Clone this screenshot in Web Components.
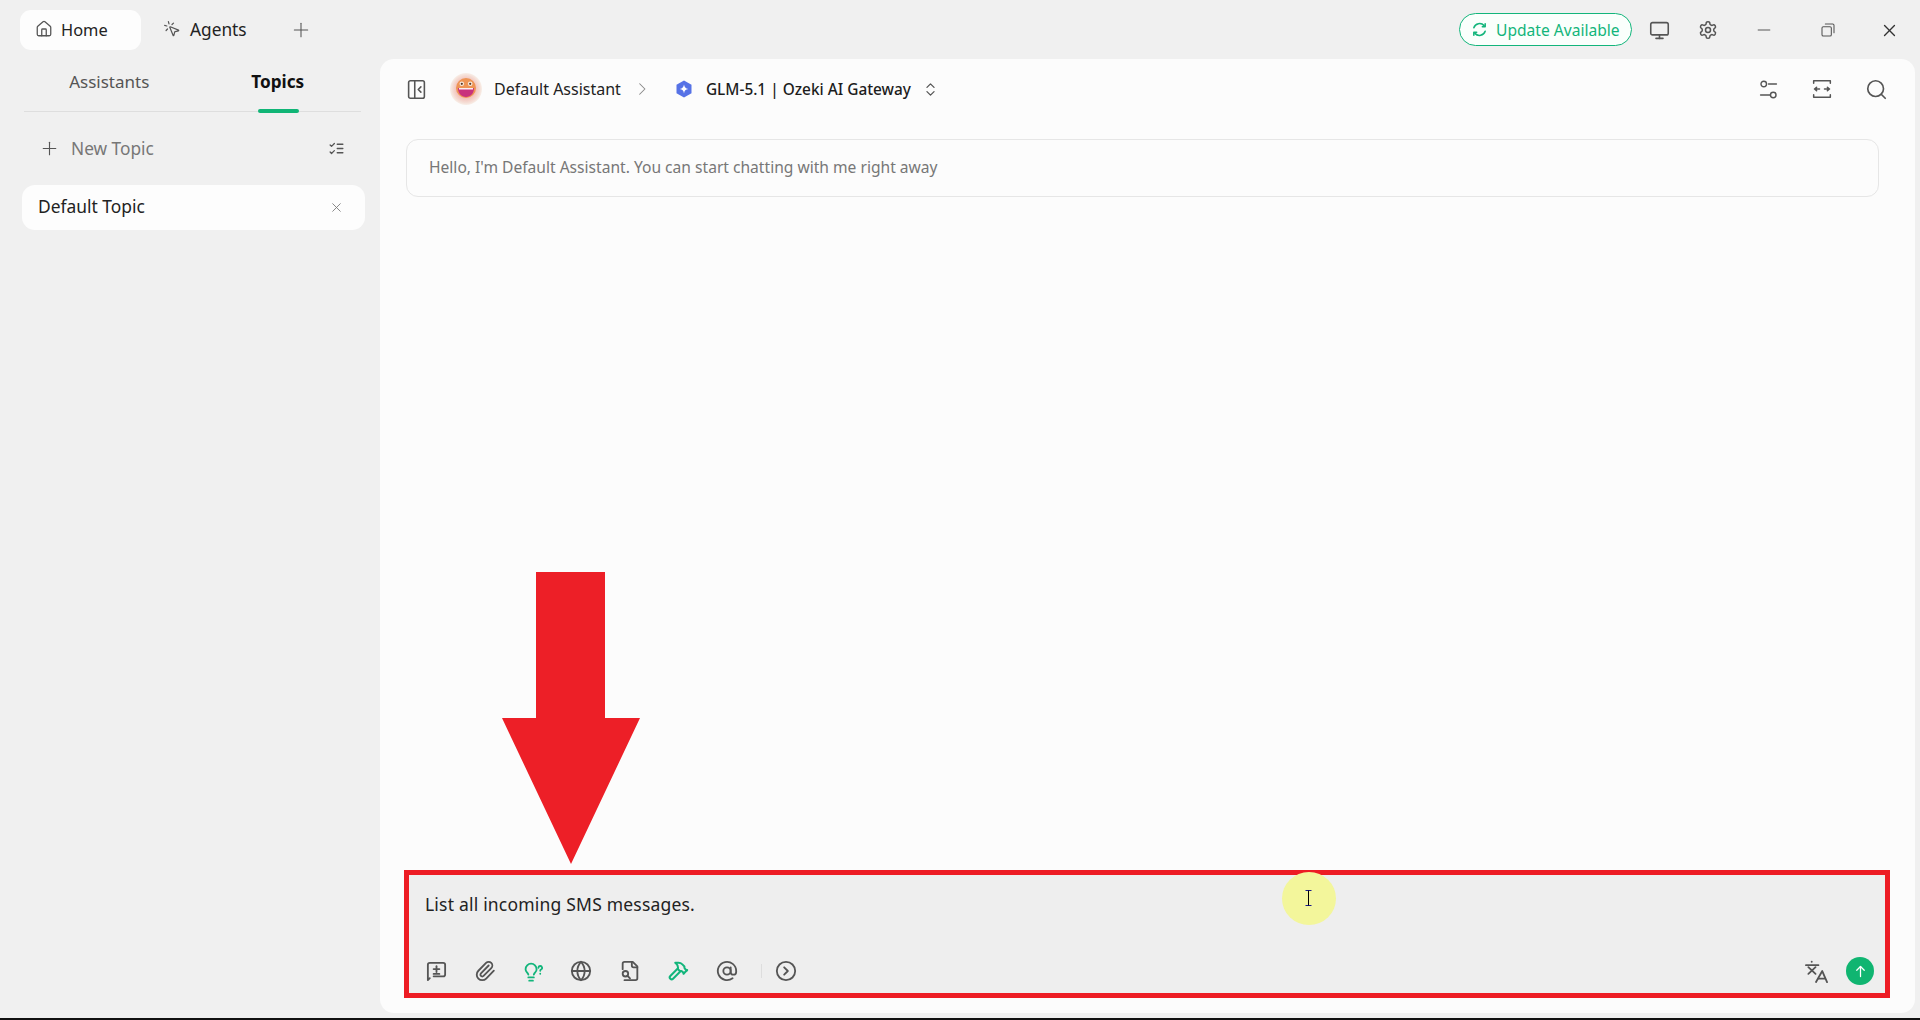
<!DOCTYPE html>
<html><head><meta charset="utf-8">
<style>
html,body{margin:0;padding:0;background:#f0f0f0}
body{font-family:"Noto Sans","Open Sans",sans-serif;overflow:hidden}
</style></head>
<body>
<app-root></app-root>
<script>
const ICONS={
house:'<path d="M15 21v-8a1 1 0 0 0-1-1h-4a1 1 0 0 0-1 1v8"/><path d="M3 10a2 2 0 0 1 .709-1.528l7-5.999a2 2 0 0 1 2.582 0l7 5.999A2 2 0 0 1 21 10v9a2 2 0 0 1-2 2H5a2 2 0 0 1-2-2z"/>',
agent:'<path d="M14 4.1 12 6"/><path d="m5.1 8-2.9-.8"/><path d="m6 12-1.9 2"/><path d="M7.2 2.2 8 5.1"/><path d="M9.037 9.69a.498.498 0 0 1 .653-.653l11 4.5a.5.5 0 0 1-.074.949l-4.349 1.041a1 1 0 0 0-.74.739l-1.04 4.35a.5.5 0 0 1-.95.074z"/>',
plus:'<path d="M12 2v20"/><path d="M2 12h20"/>',
listchecks:'<path d="m3 17 2 2 4-4"/><path d="m3 7 2 2 4-4"/><path d="M13 6h8"/><path d="M13 12h8"/><path d="M13 18h8"/>',
x:'<path d="M19 5 5 19"/><path d="m5 5 14 14"/>',
panel:'<rect x="3" y="2" width="18" height="20" rx="2"/><path d="M10 2v20"/><path d="m17 15-3-3 3-3"/>',
chevright:'<path d="m8 3 9 9-9 9"/>',
updown:'<path d="m7 15 5 5 5-5"/><path d="m7 9 5-5 5 5"/>',
search:'<circle cx="11" cy="11" r="9"/><path d="m22 22-4.6-4.6"/>',
monitor:'<rect x="2" y="3" width="20" height="14" rx="2"/><path d="M8 21h8"/><path d="M12 17v4"/>',
gear:'<path d="M12.22 2h-.44a2 2 0 0 0-2 2v.18a2 2 0 0 1-1 1.73l-.43.25a2 2 0 0 1-2 0l-.15-.08a2 2 0 0 0-2.73.73l-.22.38a2 2 0 0 0 .73 2.73l.15.1a2 2 0 0 1 1 1.72v.51a2 2 0 0 1-1 1.74l-.15.09a2 2 0 0 0-.73 2.73l.22.38a2 2 0 0 0 2.73.73l.15-.08a2 2 0 0 1 2 0l.43.25a2 2 0 0 1 1 1.73V20a2 2 0 0 0 2 2h.44a2 2 0 0 0 2-2v-.18a2 2 0 0 1 1-1.73l.43-.25a2 2 0 0 1 2 0l.15.08a2 2 0 0 0 2.73-.73l.22-.39a2 2 0 0 0-.73-2.73l-.15-.08a2 2 0 0 1-1-1.74v-.5a2 2 0 0 1 1-1.74l.15-.09a2 2 0 0 0 .73-2.73l-.22-.38a2 2 0 0 0-2.73-.73l-.15.08a2 2 0 0 1-2 0l-.43-.25a2 2 0 0 1-1-1.73V4a2 2 0 0 0-2-2z"/><circle cx="12" cy="12" r="3"/>',
sync:'<path d="M4 9.500A8.600 8.600 0 0 1 18.500 6.500"/><path d="M20 14.500A8.600 8.600 0 0 1 5.500 17.500"/><path d="M16 8h4V4"/><path d="M8 16H4v4"/>',
minus:'<path d="M2 12h20"/>',
restore:'<rect x="3" y="7" width="14" height="14" rx="2"/><path d="M8 3h11a2 2 0 0 1 2 2v11"/>',
sliders:'<path d="M12 5h10"/><path d="M2 19h12"/><circle cx="6" cy="5" r="3.500"/><circle cx="18" cy="19" r="3.500"/>',
narrow:'<path d="M2 5V2h20v3"/><path d="M2 19v3h20v-3"/><path d="M9 12H3m2.500-2L3 12l2.500 2"/><path d="M15 12h6m-2.500-2 2.500 2-2.500 2"/>',
msgdiff:'<path d="m5 19-2 2V5a2 2 0 0 1 2-2h14a2 2 0 0 1 2 2v10a2 2 0 0 1-2 2H9"/><path d="M9 9.500h6"/><path d="M12 6.500v6"/><path d="M9 14.500h6"/>',
clip:'<path d="m16 6-8.414 8.586a2 2 0 0 0 2.829 2.829l8.414-8.586a4 4 0 1 0-5.657-5.657l-8.379 8.551a6 6 0 1 0 8.485 8.485l8.379-8.551"/>',
bulb:'<path d="M14 16c.2-1 .7-1.700 1.500-2.500 1-.9 1.500-2.200 1.500-3.500A6 6 0 0 0 5 10c0 1 .2 2.200 1.500 3.500.7.700 1.300 1.500 1.500 2.500"/><path d="M8 19h6"/><path d="M9 22.500h4"/><path d="M19 8.500a2 2 0 1 1 2.800 1.900c-.6.300-.8.700-.8 1.300"/><path d="M21 15v.1"/>',
globe:'<circle cx="12" cy="12" r="10"/><path d="M12 2a14.500 14.500 0 0 0 0 20 14.500 14.500 0 0 0 0-20"/><path d="M2 12h20"/>',
filesearch:'<path d="M14 2v4a2 2 0 0 0 2 2h4"/><path d="M6 22h12a2 2 0 0 0 2-2V7l-5-5H6a2 2 0 0 0-2 2v6"/><circle cx="7" cy="15" r="3"/><path d="m12 20-2.800-2.800"/>',
hammer:'<path d="m15 12-8.373 8.373a1 1 0 1 1-3-3L12 9"/><path d="m18 15 4-4"/><path d="m21.500 11.500-1.914-1.914A2 2 0 0 1 19 8.172V7l-2.260-2.260a6 6 0 0 0-4.202-1.756L9 2.960l.92.82A6.180 6.180 0 0 1 12 8.400V10l2 2h1.172a2 2 0 0 1 1.414.586L18.500 14.500"/>',
at:'<circle cx="12" cy="12" r="4"/><path d="M16 8v5a3 3 0 0 0 6 0v-1a10 10 0 1 0-3.920 7.940"/>',
circright:'<circle cx="12" cy="12" r="10"/><path d="m10 8 4 4-4 4"/>',
translate:'<circle cx="7" cy="1.800" r="1" fill="currentColor" stroke="none"/><path d="M1 5.400h13"/><path d="m3.500 7.500 7.500 7"/><path d="m11 7.500-7.500 7"/><path d="m11.500 23 6.500-11.500 5 11.500"/><path d="M14 19.500h7"/>',
arrowup:'<path d="M12 20V4"/><path d="m6 10 6-6 6 6"/>'
};
class XIcon extends HTMLElement{
  connectedCallback(){
    const s=+(this.getAttribute('size')||20),w=this.getAttribute('w')||1.6,c=this.getAttribute('color')||'#555';
    const sh=this.attachShadow({mode:'open'});
    sh.innerHTML=`<style>:host{display:inline-flex;flex:none;width:${s}px;height:${s}px;color:${c}}svg{display:block;width:100%;height:100%;fill:none;stroke:currentColor;stroke-width:${w};stroke-linecap:round;stroke-linejoin:round}</style><svg viewBox="0 0 24 24">${ICONS[this.getAttribute('name')]}</svg>`;
  }
}
customElements.define('x-icon',XIcon);

function comp(name,css,html){
  customElements.define(name,class extends HTMLElement{
    constructor(){super();this.attachShadow({mode:'open'}).innerHTML=`<style>${css}</style>${html}`;}
  });
}
comp('nav-tab',`:host{display:inline-flex;align-items:center;gap:9px;height:40px;box-sizing:border-box;padding:0 0 2px 15px;font-size:17.3px;color:#222}
:host([active]){background:#fdfdfd;border-radius:11px;width:121px;font-size:16.4px;gap:8px}
`,`<slot name="icon"></slot><slot></slot>`);
comp('title-bar',`:host{display:flex;align-items:center;height:59px;box-sizing:border-box;padding-left:20px;padding-top:1px;flex:none}
.agents{margin-left:7px}
.add{margin-left:46px}
.right{margin-left:auto;display:flex;align-items:center}
.pill{display:flex;align-items:center;gap:8px;width:173px;height:33px;box-sizing:border-box;border:1px solid #12b57b;border-radius:17px;background:#fafffc;padding-left:11px;color:#12b57b;font-size:15.6px;margin-top:-1px;white-space:nowrap}
.cell{display:flex;align-items:center;justify-content:center;height:40px}
`,`<nav-tab active><x-icon slot="icon" name="house" size="18" w="1.7"></x-icon>Home</nav-tab>
<nav-tab class="agents"><x-icon slot="icon" name="agent" size="18" w="1.6"></x-icon>Agents</nav-tab>
<x-icon class="add" name="plus" size="16" w="1.6"></x-icon>
<div class="right"><div class="pill"><x-icon name="sync" size="17" w="2.2" color="#12b57b"></x-icon><span>Update Available</span></div>
<div class="cell" style="width:51px;padding-left:2px"><x-icon name="monitor" size="21" w="1.8"></x-icon></div>
<div class="cell" style="width:46px"><x-icon name="gear" size="20" w="1.8"></x-icon></div>
<div class="cell" style="width:66px"><x-icon name="minus" size="14" w="1.7" color="#555"></x-icon></div>
<div class="cell" style="width:61px"><x-icon name="restore" size="16" w="1.6" color="#555"></x-icon></div>
<div class="cell" style="width:62px"><x-icon name="x" size="17" w="1.9" color="#333"></x-icon></div>
</div>`);
comp('side-bar',`:host{display:flex;flex-direction:column;width:380px;flex:none}
.tabs{display:grid;grid-template-columns:1fr 1fr;margin:0 19px 0 24px;height:53px;box-sizing:border-box;border-bottom:1px solid #dedede}
.tab{position:relative;text-align:center;font-size:17px;line-height:20px;padding:13px 0 0 2px;color:#555}
.tab.on{color:#111;font-weight:700;font-size:17.2px}
.tab.on::after{content:"";position:absolute;left:65px;bottom:-2px;width:41px;height:4px;border-radius:2px;background:#10b576}
.new{display:flex;align-items:center;height:38px;margin-top:17px;padding:0 35px 0 42px;color:#777;font-size:17.3px}
.new span{margin-left:14px;flex:1}
.card{display:flex;align-items:center;justify-content:space-between;height:45px;margin:18px 15px 0 22px;box-sizing:border-box;padding:0 22px 3px 16px;border-radius:13px;background:#fdfdfd;color:#222;font-size:17.4px}
.card x-icon{margin-top:3px}
`,`<div class="tabs"><div class="tab">Assistants</div><div class="tab on">Topics</div></div>
<div class="new"><x-icon name="plus" size="15" w="1.8"></x-icon><span>New Topic</span><x-icon name="listchecks" size="17" w="1.8"></x-icon></div>
<div class="card"><span>Default Topic</span><x-icon name="x" size="13" w="1.6" color="#777"></x-icon></div>`);
comp('assistant-avatar',`:host{display:inline-block;flex:none;width:32px;height:32px}svg{display:block;width:100%;height:100%}`,
`<svg viewBox="0 0 32 32"><defs><radialGradient id="g"><stop offset=".5" stop-color="#f2b8b0"/><stop offset=".85" stop-color="#f5ddd5"/><stop offset="1" stop-color="#f8efe8"/></radialGradient><filter id="b" x="-10%" y="-10%" width="120%" height="120%"><feGaussianBlur stdDeviation=".35"/></filter></defs><circle cx="16" cy="16" r="16" fill="url(#g)"/><g filter="url(#b)"><circle cx="16" cy="15" r="10" fill="#ee9455"/><circle cx="11.800" cy="10.800" r="2.300" fill="#f6e8dc"/><circle cx="20.200" cy="10.800" r="2.300" fill="#f6e8dc"/><circle cx="11.800" cy="10.800" r="1.100" fill="#5a3520"/><circle cx="20.200" cy="10.800" r="1.100" fill="#5a3520"/><path d="M8 15h16c0 5.500-3.400 9-8 9s-8-3.500-8-9z" fill="#c8337d"/><path d="M9 15h14v1.500H9z" fill="#fbeef0"/></g></svg>`);
comp('chat-header',`:host{display:flex;align-items:center;height:60px;flex:none;box-sizing:border-box;padding:0 28px 0 26px;font-size:16px;color:#222}
.name{margin-left:12px;white-space:nowrap}
.model{margin-left:13px;font-weight:500;font-size:15.4px;white-space:nowrap;color:#1c1c1c}
.right{margin-left:auto;display:flex;align-items:center}
`,`<x-icon name="panel" size="21" w="1.8"></x-icon>
<assistant-avatar style="margin-left:23px"></assistant-avatar>
<span class="name">Default Assistant</span>
<x-icon name="chevright" size="14" w="1.8" color="#888" style="margin-left:14px"></x-icon>
<svg width="18" height="18" viewBox="0 0 18 18" style="margin-left:26px;flex:none"><path d="M9 .6 16.500 4.800v8.400L9 17.400 1.500 13.200V4.800z" fill="#5672e6"/><path d="M9 4.600c.5 2.800 1.500 3.900 4.300 4.400-2.800.5-3.800 1.600-4.300 4.400-.5-2.800-1.500-3.900-4.300-4.400 2.800-.5 3.800-1.600 4.300-4.400z" fill="#fff"/></svg>
<span class="model">GLM-5.1 | Ozeki AI Gateway</span>
<x-icon name="updown" size="17" w="1.8" style="margin-left:11px"></x-icon>
<div class="right"><x-icon name="sliders" size="19" w="1.8"></x-icon>
<x-icon name="narrow" size="20" w="1.8" style="margin-left:34px"></x-icon>
<x-icon name="search" size="21" w="1.9" style="margin-left:34px"></x-icon></div>`);
comp('greeting-card',`:host{display:flex;align-items:center;height:58px;box-sizing:border-box;margin:20px 36px 0 26px;padding:0 22px 2px;border:1px solid #e6e6e6;border-radius:12px;color:#777;font-size:15.6px;flex:none}`,`<slot></slot>`);
comp('chat-composer',`:host{position:relative;z-index:0;display:flex;flex-direction:column;justify-content:space-between;height:128px;box-sizing:border-box;margin:0 25px 15px 24px;border:5px solid #ed1c24;background:#eee;flex:none}
.text{padding:15px 0 0 16px;font-size:17.5px;letter-spacing:.2px;line-height:28px;color:#222;position:relative}
.bar{display:flex;align-items:center;height:24px;margin-bottom:10px;padding:0 11px 0 16px;}
.bar x-icon{margin-right:26.5px}
.bar .sep{width:1px;height:14px;background:#ddd;margin:0 13px 0 -3px}
.send{display:flex;align-items:center;justify-content:center;width:28px;height:28px;border-radius:50%;background:#10b571;margin-left:18px}
.hl{position:absolute;left:873px;top:-3px;width:54px;height:53px;border-radius:50%;background:#f3f69b}
.cur{position:absolute;left:896px;top:15px;width:7px;height:16px}
`,`<div class="hl"></div>
<svg class="cur" viewBox="0 0 7 16"><path d="M.5.500h6M.5 15.500h6" stroke="#1a1a8c" fill="none"/><path d="M3.500 .500v15" stroke="#000" fill="none"/></svg>
<div class="text">List all incoming SMS messages.</div>
<div class="bar"><x-icon name="msgdiff" size="23" w="1.9" style="margin-right:25.5px"></x-icon><x-icon name="clip" size="22" w="2" style="margin-right:25px"></x-icon>
<x-icon name="bulb" size="22" color="#12b57b" w="2" style="margin-right:27.5px"></x-icon>
<x-icon name="globe" size="22" w="2"></x-icon><x-icon name="filesearch" size="22" w="2"></x-icon><x-icon name="hammer" size="22" w="2.2" color="#12b57b"></x-icon><x-icon name="at" size="22" w="2"></x-icon><div class="sep"></div><x-icon name="circright" size="22" w="2" style="margin-right:0"></x-icon>
<x-icon name="translate" size="23" w="1.9" style="margin:0 0 0 auto"></x-icon><div class="send"><x-icon name="arrowup" size="15" w="2" color="#fff" style="margin:0"></x-icon></div></div>`);
comp('callout-arrow',`:host{position:absolute;left:122px;top:513px;width:138px;height:292px;display:block}svg{display:block;width:100%;height:100%}`,
`<svg viewBox="0 0 138 292"><path d="M34 0h69v146h35L69 292 0 146h34z" fill="#ed1f27"/></svg>`);
comp('main-panel',`:host{display:flex;flex-direction:column;flex:none;width:1535px;height:954px;border-radius:14px;background:#fcfcfc;position:relative}
.fill{flex:1}`,`<chat-header></chat-header><greeting-card>Hello, I'm Default Assistant. You can start chatting with me right away</greeting-card><div class="fill"></div><chat-composer></chat-composer><callout-arrow></callout-arrow>`);
comp('app-root',`:host{display:flex;flex-direction:column;width:1920px;height:1020px;background:#f0f0f0;overflow:hidden}
.body{display:flex;flex:1}
.foot{height:5px;flex:none}
.line{height:2px;background:#111;flex:none}`,`<title-bar></title-bar><div class="body"><side-bar></side-bar><main-panel></main-panel></div><div class="foot"></div><div class="line"></div>`);
</script>
</body></html>
